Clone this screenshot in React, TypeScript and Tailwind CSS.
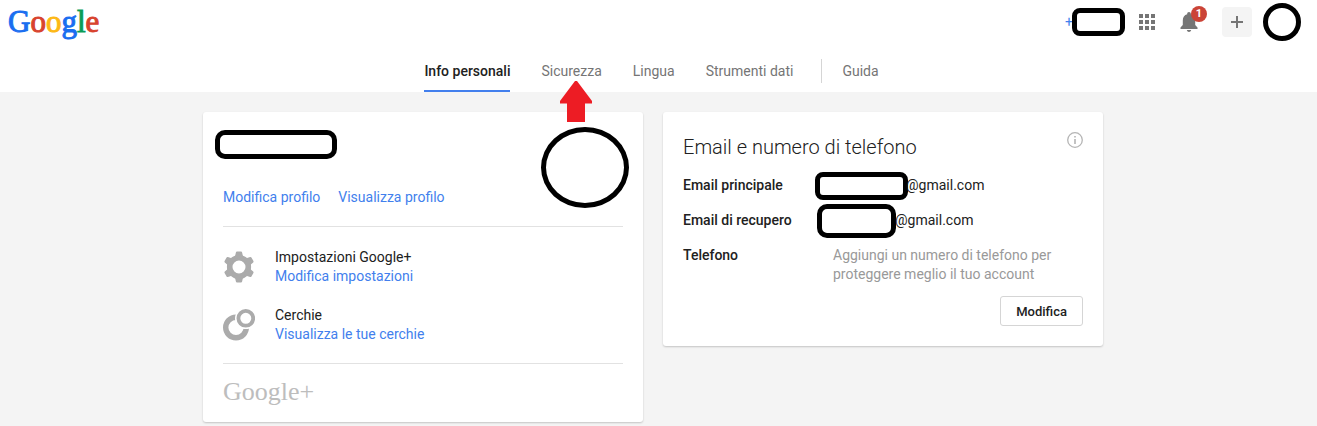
import type { ReactNode } from "react";

const tabs = [
  { href: "#info", label: "Info personali", active: true },
  { href: "#sicurezza", label: "Sicurezza", marked: true },
  { href: "#lingua", label: "Lingua" },
  { href: "#dati", label: "Strumenti dati" },
];

const logoLetters = [
  { char: "G", color: "text-[#1a6ef0]" },
  { char: "o", color: "text-[#d8432e]" },
  { char: "o", color: "text-[#fdb813]" },
  { char: "g", color: "text-[#1a6ef0]" },
  { char: "l", color: "text-[#0a9d58]" },
  { char: "e", color: "text-[#d8432e]" },
];

function GoogleLogo() {
  return (
    <a href="#home" className="font-['Liberation_Serif',serif] text-[31px] leading-9 [-webkit-text-stroke:1px]">
      {logoLetters.map((letter, i) => (
        <span key={i} className={letter.color}>{letter.char}</span>
      ))}
    </a>
  );
}

function Redacted({ className = "" }: { className?: string }) {
  return <div className={`shrink-0 border-5 border-black bg-white ${className}`} />;
}

function AppsIcon() {
  return (
    <svg width="16" height="16" viewBox="0 0 16 16" fill="#757575">
      {[0, 6, 12].map((y) => [0, 6, 12].map((x) => <rect key={`${x}-${y}`} x={x} y={y} width="4" height="4" />))}
    </svg>
  );
}

function BellIcon() {
  return (
    <svg width="18" height="20" viewBox="0 0 18 20" fill="#757575">
      <path d="M9 0C7.9 0 7.2.8 7.2 1.7v.6C4.3 3 2.8 5.500 2.800 8.500V13L.5 15.500V17h17v-1.500L15.200 13V8.500c0-3-1.500-5.500-4.400-6.200v-.6C10.800.8 10.100 0 9 0z" />
      <path d="M6.800 18h4.400c-.3 1.200-1.200 2-2.200 2s-1.900-.8-2.200-2z" />
    </svg>
  );
}

function GearIcon() {
  return (
    <svg width="32" height="32" viewBox="0 0 32 32">
      <circle cx="16" cy="16" r="9.300" fill="none" stroke="#ababab" strokeWidth="5.600" />
      {[0, 60, 120, 180, 240, 300].map((deg) => (
        <path key={deg} transform={`rotate(${deg} 16 16)`} fill="#ababab" d="M10 8 12.200 4.500 12.900 1.400Q13.100.5 14 .5h4q.9 0 1.100.9l.7 3.100L22 8q-6-2-12 0z" />
      ))}
    </svg>
  );
}

function CirclesIcon() {
  return (
    <svg width="32" height="32" viewBox="0 0 32 32" fill="none" stroke="#ababab">
      <circle cx="13" cy="18.500" r="10.300" strokeWidth="5.400" />
      <circle cx="22.800" cy="9.300" r="10.800" fill="#fff" stroke="none" />
      <circle cx="22.800" cy="9.300" r="7.400" strokeWidth="3.800" />
    </svg>
  );
}

function InfoIcon() {
  return (
    <svg width="16" height="16" viewBox="0 0 16 16" fill="none" stroke="#b5b5b5">
      <circle cx="8" cy="8" r="7.300" strokeWidth="1.300" />
      <path d="M8 7v5M8 4v1.600" strokeWidth="1.600" />
    </svg>
  );
}

function Arrow() {
  return (
    <svg className="absolute top-[37px] left-[19px] z-10" width="32" height="41" viewBox="0 0 32 41">
      <path d="M15 0h2l15 20v2.500h-7V41H7V22.500H0V20z" fill="#ed1c24" />
    </svg>
  );
}

function Card({ children, className = "" }: { children: ReactNode; className?: string }) {
  return (
    <section className={`flex-1 rounded-[3px] bg-white px-5 shadow-[0_1px_2px_rgba(0,0,0,0.2)] ${className}`}>
      {children}
    </section>
  );
}

function SettingRow({ icon, title, link }: { icon: ReactNode; title: string; link: string }) {
  return (
    <div className="flex items-center gap-5">
      {icon}
      <div>
        <div>{title}</div>
        <a href="#modifica" className="text-[#427fed]">{link}</a>
      </div>
    </div>
  );
}

export default function App() {
  return (
    <div className="min-h-screen bg-[#f4f4f4] font-[Roboto,sans-serif] text-sm leading-[19px] text-[#212121]">
      <header className="bg-white">
        <div className="flex h-11 items-center justify-between pr-4 pl-2">
          <GoogleLogo />
          <div className="flex items-center">
            <a href="#profilo" className="text-[#427fed]">+</a>
            <Redacted className="-ml-px mr-3.5 h-7 w-[53px] rounded-lg" />
            <button aria-label="App" className="mr-[25px]"><AppsIcon /></button>
            <button aria-label="Notifiche" className="relative mr-6">
              <BellIcon />
              <span className="absolute -top-1.5 left-[11px] size-4 rounded-full bg-[#cb4437] text-[11px] leading-4 font-bold text-white">1</span>
            </button>
            <button aria-label="Condividi" className="mr-[11px] flex size-[30px] items-center justify-center rounded-sm bg-[#f4f4f4]">
              <svg width="12" height="12" viewBox="0 0 12 12" stroke="#757575" strokeWidth="2"><path d="M6 0v12M0 6h12" /></svg>
            </button>
            <Redacted className="size-[38px] rounded-full" />
          </div>
        </div>
        <nav className="flex justify-center gap-[31px] pr-3.5 text-[#757575]">
          {tabs.map((tab) => (
            <div key={tab.label} className="relative">
              <a
                href={tab.href}
                className={`block border-b-2 pt-[18px] pb-[9px] ${tab.active ? "border-[#427fed] font-medium text-[#212121]" : "border-transparent"}`}
              >
                {tab.label}
              </a>
              {tab.marked && <Arrow />}
            </div>
          ))}
          <div className="-ml-[3px] flex items-start gap-5">
            <span className="mt-[15px] h-6 w-px bg-[#d5d5d5]" />
            <a href="#guida" className="pt-[18px]">Guida</a>
          </div>
        </nav>
      </header>

      <main className="pt-5 pr-[11px]">
        <div className="mx-auto flex max-w-[900px] items-start gap-5">
          <Card className="pt-[15px] pb-3">
            <div className="flex justify-between">
              <div>
                <Redacted className="mt-[3px] -ml-2 h-[29px] w-[122px] rounded-[10px]" />
                <div className="mt-[29px] flex gap-[18px] text-[#427fed]">
                  <a href="#modifica-profilo">Modifica profilo</a>
                  <a href="#visualizza-profilo">Visualizza profilo</a>
                </div>
              </div>
              <Redacted className="-mr-1.5 h-[81px] w-[88px] rounded-[50%]" />
            </div>
            <div className="mt-[18px] flex flex-col gap-5 border-y border-[#e2e2e2] pt-[21px] pb-[19px]">
              <SettingRow icon={<GearIcon />} title="Impostazioni Google+" link="Modifica impostazioni" />
              <SettingRow icon={<CirclesIcon />} title="Cerchie" link="Visualizza le tue cerchie" />
            </div>
            <div className="mt-2.5 font-['Liberation_Serif',serif] text-[26px] leading-9 text-[#bdbdbd]">Google+</div>
          </Card>

          <Card className="py-5">
            <div className="flex items-start justify-between">
              <h2 className="mt-0.5 text-xl leading-[26px] font-light">Email e numero di telefono</h2>
              <button aria-label="Informazioni"><InfoIcon /></button>
            </div>
            <dl className="mt-4 grid grid-cols-[132px_1fr] gap-y-4">
              <dt className="font-medium">Email principale</dt>
              <dd className="flex items-center">
                <Redacted className="-my-1.5 -mr-0.5 h-7 w-[93px] rounded-lg" />
                <span>@gmail.com</span>
              </dd>
              <dt className="font-medium">Email di recupero</dt>
              <dd className="flex items-center">
                <Redacted className="-my-2 -mr-px ml-0.5 h-[34px] w-[79px] rounded-[10px]" />
                <span>@gmail.com</span>
              </dd>
              <dt className="font-medium">Telefono</dt>
              <dd className="max-w-64 pl-[18px] text-[#999]">
                Aggiungi un numero di telefono per proteggere meglio il tuo account
              </dd>
            </dl>
            <div className="mt-3 flex justify-end">
              <button className="h-[30px] rounded-[3px] border border-[#d5d5d5] px-[15px] text-[13px] font-medium">Modifica</button>
            </div>
          </Card>
        </div>
      </main>
    </div>
  );
}
